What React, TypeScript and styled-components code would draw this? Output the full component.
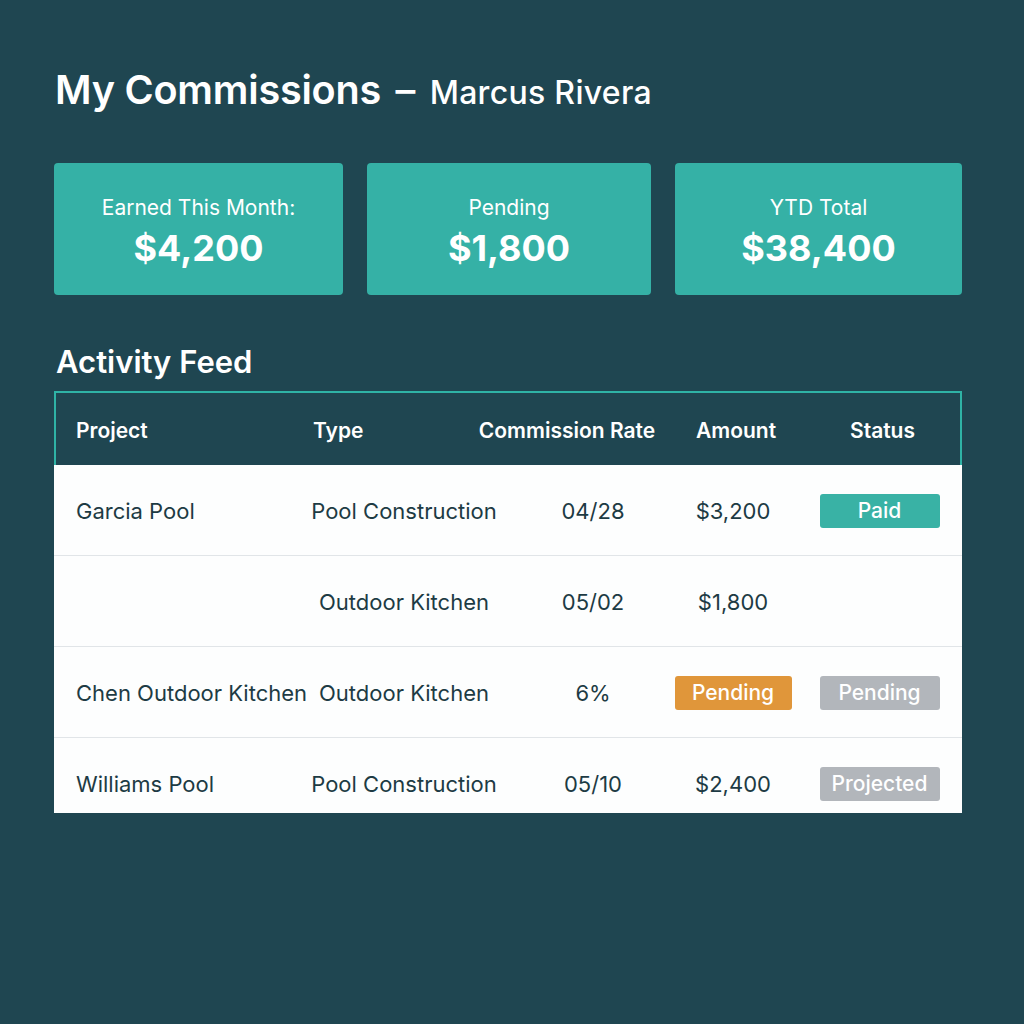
import { createGlobalStyle } from "styled-components"
import styled from "styled-components"

const GlobalStyle = createGlobalStyle`
  html, body {
    margin: 0;
    padding: 0;
    background: #1f4651;
  }
  body {
    font-family: Inter, "Noto Sans", "Liberation Sans", sans-serif;
    -webkit-font-smoothing: antialiased;
  }
`

const Page = styled.div`
  width: 1024px;
  min-height: 1024px;
  box-sizing: border-box;
  padding: 66px 62px 0 54px;
  background: #1f4651;
  color: #ffffff;
`

const Title = styled.h1`
  margin: 0 0 0 1px;
  font-size: 39.6px;
  line-height: 48px;
  font-weight: 600;
  letter-spacing: -0.2px;
  white-space: nowrap;
  em {
    font-style: normal;
    font-weight: 500;
    display: inline-block;
    width: 25px;
    margin: 0 0 0 2px;
    text-align: center;
  }
  span {
    font-size: 32px;
    font-weight: 500;
    letter-spacing: 0.3px;
    margin-left: 2px;
  }
`

const Cards = styled.div`
  display: grid;
  grid-template-columns: 289px 284px 287px;
  column-gap: 24px;
  margin-top: 46px;
`

const Card = styled.div`
  height: 132px;
  background: #35b1a6;
  border-radius: 4px;
  display: flex;
  flex-direction: column;
  align-items: center;
  justify-content: center;
  gap: 4px;
  padding-top: 6px;
  box-sizing: border-box;
`

const CardLabel = styled.div`
  font-size: 21px;
  line-height: 28px;
  font-weight: 400;
`

const CardValue = styled.div`
  font-size: 36px;
  line-height: 44px;
  font-weight: 700;
`

const SectionTitle = styled.h2`
  margin: 47px 0 0 2px;
  font-size: 31px;
  line-height: 40px;
  font-weight: 600;
`

const Table = styled.div`
  margin-top: 9px;
  width: 908px;
`

const HeaderRow = styled.div`
  display: grid;
  grid-template-columns: 237px 174px 200px 138px 1fr;
  align-items: center;
  height: 74px;
  box-sizing: border-box;
  border: 2px solid #2fb3a6;
  border-bottom: none;
`

const HeadCell = styled.div<{ $align?: "left" | "center" }>`
  font-size: 21px;
  font-weight: 600;
  text-align: ${({ $align }) => $align ?? "left"};
  padding-left: ${({ $align }) => ($align === "center" ? 0 : "20px")};
  white-space: nowrap;
  padding-top: 2px;
`

const Body = styled.div`
  height: 348px;
  overflow: hidden;
  background: #ffffff;
`

const Row = styled.div`
  display: grid;
  grid-template-columns: 237px 226px 152px 128px 1fr;
  align-items: center;
  height: 91px;
  box-sizing: border-box;
  border-bottom: 1px solid #e1e5e8;
  padding-top: 2px;
  background: #fdfefe;
`

const Cell = styled.div<{ $align?: "left" | "center" }>`
  font-size: 22px;
  font-weight: 400;
  color: #1d3b44;
  white-space: nowrap;
  padding-left: ${({ $align }) => ($align === "left" ? "22px" : 0)};
  display: flex;
  justify-content: ${({ $align }) => ($align === "left" ? "flex-start" : "center")};
`

const badgeColors = {
  paid: "#39b2a5",
  pending: "#e0963a",
  muted: "#b2b6bb",
}

const Badge = styled.span<{ $tone: keyof typeof badgeColors; $width?: number }>`
  display: inline-block;
  width: ${({ $width }) => $width ?? 120}px;
  height: 34px;
  line-height: 34px;
  border-radius: 3px;
  background: ${({ $tone }) => badgeColors[$tone]};
  color: #ffffff;
  font-size: 21px;
  font-weight: 500;
  text-align: center;
`

type Status = { label: string; tone: keyof typeof badgeColors }

type Activity = {
  id: number
  project: string
  type: string
  rate: string
  amount: string | Status
  status?: Status
}

const summary = [
  { label: "Earned This Month:", value: "$4,200" },
  { label: "Pending", value: "$1,800" },
  { label: "YTD Total", value: "$38,400" },
]

const activity: Activity[] = [
  {
    id: 1,
    project: "Garcia Pool",
    type: "Pool Construction",
    rate: "04/28",
    amount: "$3,200",
    status: { label: "Paid", tone: "paid" },
  },
  { id: 2, project: "", type: "Outdoor Kitchen", rate: "05/02", amount: "$1,800" },
  {
    id: 3,
    project: "Chen Outdoor Kitchen",
    type: "Outdoor Kitchen",
    rate: "6%",
    amount: { label: "Pending", tone: "pending" },
    status: { label: "Pending", tone: "muted" },
  },
  {
    id: 4,
    project: "Williams Pool",
    type: "Pool Construction",
    rate: "05/10",
    amount: "$2,400",
    status: { label: "Projected", tone: "muted" },
  },
]

export default function App() {
  return (
    <Page>
      <GlobalStyle />
      <Title>
        My Commissions <em>–</em> <span>Marcus Rivera</span>
      </Title>

      <Cards>
        {summary.map((item) => (
          <Card key={item.label}>
            <CardLabel>{item.label}</CardLabel>
            <CardValue>{item.value}</CardValue>
          </Card>
        ))}
      </Cards>

      <SectionTitle>Activity Feed</SectionTitle>

      <Table>
        <HeaderRow>
          <HeadCell>Project</HeadCell>
          <HeadCell>Type</HeadCell>
          <HeadCell $align="center">Commission Rate</HeadCell>
          <HeadCell $align="center">Amount</HeadCell>
          <HeadCell $align="center">Status</HeadCell>
        </HeaderRow>
        <Body>
          {activity.map((item) => (
            <Row key={item.id}>
              <Cell $align="left">{item.project}</Cell>
              <Cell>{item.type}</Cell>
              <Cell>{item.rate}</Cell>
              <Cell>
                {typeof item.amount === "string" ? (
                  item.amount
                ) : (
                  <Badge $tone={item.amount.tone} $width={117}>
                    {item.amount.label}
                  </Badge>
                )}
              </Cell>
              <Cell>
                {item.status && <Badge $tone={item.status.tone}>{item.status.label}</Badge>}
              </Cell>
            </Row>
          ))}
        </Body>
      </Table>
    </Page>
  )
}
